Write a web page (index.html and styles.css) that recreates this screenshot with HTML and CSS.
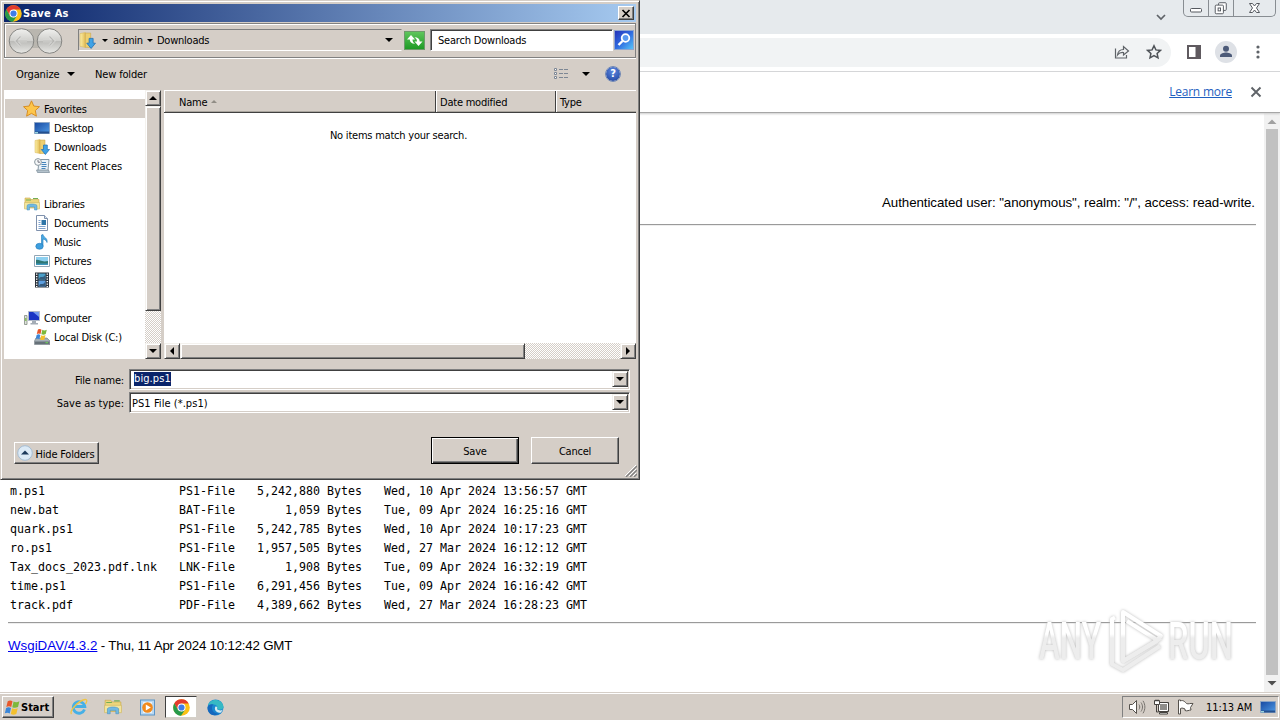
FILE: index.html
```html
<!DOCTYPE html>
<html lang="en">
<head>
  <meta charset="UTF-8" />
  <title>WsgiDAV - Index of /</title>
  <link rel="stylesheet" href="styles.css">
</head>
<body>

  <!-- Shared icons -->
  <svg class="defs" width="0" height="0">
    <defs>
      <linearGradient id="gFolder" x1="0" y1="0" x2="1" y2="0">
        <stop offset="0" stop-color="#fbeea6" /><stop offset="1" stop-color="#e3bd55" />
      </linearGradient>
      <linearGradient id="gScreen" x1="0" y1="0" x2="1" y2="1">
        <stop offset="0" stop-color="#1748a0" /><stop offset="1" stop-color="#4f9be6" />
      </linearGradient>
      <linearGradient id="gBall" x1="0" y1="0" x2="0" y2="1">
        <stop offset="0" stop-color="#f1f1ef" /><stop offset=".48" stop-color="#d0d0cd" />
        <stop offset=".52" stop-color="#bcbcb9" /><stop offset="1" stop-color="#e8e8e5" />
      </linearGradient>
      <linearGradient id="gMark" gradientUnits="userSpaceOnUse" x1="0" y1="34" x2="0" y2="38">
        <stop offset="0" stop-color="#fff" /><stop offset="1" stop-color="#ededed" />
      </linearGradient>
      <symbol id="chrome" viewBox="0 0 16 16">
        <circle cx="8" cy="8" r="7.8" fill="#fbc116" />
        <path d="M8 8 4.6 10 1.2 4.1A7.8 7.8 0 0 1 14.8 4.2H8z" fill="#e33b2e" />
        <path d="M1.2 4.1 4.6 10 8 11.8l3.4-1.8-3.9 5.8A7.8 7.8 0 0 1 1.2 4.1z" fill="#269a4a" />
        <circle cx="8" cy="8" r="3.8" fill="#fff" />
        <circle cx="8" cy="8" r="2.9" fill="#3f7de8" />
      </symbol>
      <symbol id="downloads" viewBox="0 0 16 16">
        <path d="M1 1.5 6 .5v14l-5-1z" fill="url(#gFolder)" stroke="#d9b757" stroke-width=".5" />
        <path d="M6 1h5v13.5H6z" fill="#edcf70" stroke="#c9a244" stroke-width=".5" />
        <path d="M9.5 6h3.8v4.5h2.2l-4.1 5-4.1-5h2.2z" fill="#3fa2e6" stroke="#1c6cb0" stroke-width=".7" />
      </symbol>
      <symbol id="flag" viewBox="0 0 16 16">
        <path d="M3.500 2C5.500.8 7 1.500 8 2L6.800 7.500C5.200 6.500 3.800 6.700 2.200 7.500z" fill="#e8582a" />
        <path d="M9 2.300c2 1 3.500.8 5.500-.3L13.200 7.500c-2 1-3.600.9-5.400.2z" fill="#7db83a" />
        <path d="M2 8.500c1.600-.9 3-.9 4.600 0L5.400 13.600C4 12.700 2.300 12.700.8 13.500z" fill="#3a86d8" />
        <path d="M7.600 8.800c1.800.9 3.400.9 5.300-.1L11.600 14c-1.900 1-3.500.9-5.200.1z" fill="#f4c02c" />
      </symbol>
      <symbol id="libraries" viewBox="0 0 16 16">
        <path d="M1 2h5l1 1.500h8V12H1z" fill="#ecd67c" stroke="#c9aa4b" stroke-width=".6" />
        <path d="M2 4h5M9 2.500h5" stroke="#72ae55" />
        <path d="M.5 6.500h15V13h-3V9.500h-9V13h-3z" fill="#f3e6a0" stroke="#cbb35a" stroke-width=".5" />
        <path d="M3 14V9.500C4 7.500 12 7.500 13 9.500V14h-2.500v-3h-5v3z" fill="#72b9e2" stroke="#4590c2" stroke-width=".5" />
      </symbol>
      <symbol id="monitor" viewBox="0 0 16 16">
        <path d="M.5 2.500h15v11H.5z" fill="url(#gScreen)" stroke="#8ba4c4" />
        <path d="M1 11.500h14v2H1z" fill="#24508f" />
        <path d="M1 12h3v1.500H1z" fill="#9ad2dc" />
      </symbol>
      <symbol id="diskbody" viewBox="0 0 16 16">
        <path d="M2 9h11l3 3v3.500H.5V12z" fill="#a4aeb5" stroke="#6b757c" stroke-width=".6" />
        <path d="M1 12.500h14.500V15H1z" fill="#667178" />
        <path d="M11.500 13.200h2.500v1h-2.500z" fill="#6cdd52" />
      </symbol>
    </defs>
  </svg>

  <div class="screen">

    <!-- Browser window -->
    <div class="browser">
      <div class="tabstrip">
        <svg class="chevron" width="12" height="8" viewBox="0 0 12 8"><path d="M2 2l4 4 4-4" fill="none" stroke="#5f6368" stroke-width="1.700" /></svg>
        <div class="caption">
          <span class="cap"><svg width="24" height="16" viewBox="0 0 24 16"><rect x="6.500" y="8.500" width="11" height="3.500" rx="1" fill="#fff" stroke="#55595f" /></svg></span>
          <span class="cap"><svg width="24" height="16" viewBox="0 0 25 16"><rect x="10" y="2.500" width="8" height="8" rx="1" fill="#fff" stroke="#55595f" /><rect x="6.500" y="5" width="8.500" height="9" rx="1" fill="#fff" stroke="#55595f" /><rect x="9.500" y="8" width="2.500" height="3" fill="#fff" stroke="#55595f" /></svg></span>
          <span class="cap cap-close"><svg width="41" height="16" viewBox="0 0 41 16"><path d="M15.500 3.500h3l2 2.500 2-2.500h3L22.500 8l3 4.500h-3l-2-2.500-2 2.500h-3l3-4.500z" fill="#fff" stroke="#55595f" /></svg></span>
        </div>
      </div>

      <div class="toolbar">
        <div class="omnibox">
          <svg width="16" height="16" viewBox="0 0 16 16"><path d="M1.500 4.500v9.500h11v-3M3.500 11c.5-4 2.500-5.500 6-5.500v-3l5 4.500-5 4V8.500c-2.500-.2-4.500.5-6 2.500z" fill="none" stroke="#5f6368" stroke-width="1.200" /></svg>
          <svg width="16" height="16" viewBox="0 0 16 16"><path d="M8 1.800l1.900 4.100 4.500.5-3.300 3 .9 4.500L8 11.700l-4 2.200.9-4.500-3.300-3 4.500-.5z" fill="none" stroke="#4f5358" stroke-width="1.500" /></svg>
        </div>
        <svg class="panel-icon" width="14" height="14" viewBox="0 0 14 14"><path d="M1 1h12v12H1z" fill="none" stroke="#5f5a5f" stroke-width="2" /><path d="M8.500 1H13v12H8.500z" fill="#5f5a5f" /></svg>
        <svg class="avatar" width="22" height="22" viewBox="0 0 22 22"><circle cx="11" cy="11" r="11" fill="#dee1e6" /><circle cx="11" cy="7.700" r="3" fill="#4c5a78" /><path d="M5 16v-1.500c0-2 4-3 6-3s6 1 6 3V16z" fill="#4c5a78" /></svg>
        <svg class="menu-icon" width="4" height="14" viewBox="0 0 4 14"><circle cx="2" cy="2" r="1.600" fill="#5f6368" /><circle cx="2" cy="7" r="1.600" fill="#5f6368" /><circle cx="2" cy="12" r="1.600" fill="#5f6368" /></svg>
      </div>

      <div class="infobar">
        <a href="#">Learn more</a>
        <svg width="12" height="12" viewBox="0 0 12 12"><path d="M1.500 1.500l9 9M10.500 1.500l-9 9" stroke="#5f6368" stroke-width="1.900" /></svg>
      </div>

      <div class="viewport">
        <div class="page">
          <p class="auth">Authenticated user: "anonymous", realm: "/", access: read-write.</p>
          <hr>
          <table class="files">
            <tr><td>m.ps1</td><td>PS1-File</td><td class="right">5,242,880 Bytes</td><td>Wed, 10 Apr 2024 13:56:57 GMT</td></tr>
            <tr><td>new.bat</td><td>BAT-File</td><td class="right">1,059 Bytes</td><td>Tue, 09 Apr 2024 16:25:16 GMT</td></tr>
            <tr><td>quark.ps1</td><td>PS1-File</td><td class="right">5,242,785 Bytes</td><td>Wed, 10 Apr 2024 10:17:23 GMT</td></tr>
            <tr><td>ro.ps1</td><td>PS1-File</td><td class="right">1,957,505 Bytes</td><td>Wed, 27 Mar 2024 16:12:12 GMT</td></tr>
            <tr><td>Tax_docs_2023.pdf.lnk</td><td>LNK-File</td><td class="right">1,908 Bytes</td><td>Tue, 09 Apr 2024 16:32:19 GMT</td></tr>
            <tr><td>time.ps1</td><td>PS1-File</td><td class="right">6,291,456 Bytes</td><td>Tue, 09 Apr 2024 16:16:42 GMT</td></tr>
            <tr><td>track.pdf</td><td>PDF-File</td><td class="right">4,389,662 Bytes</td><td>Wed, 27 Mar 2024 16:28:23 GMT</td></tr>
          </table>
          <hr>
          <p class="footer"><a href="#">WsgiDAV/4.3.2</a> - Thu, 11 Apr 2024 10:12:42 GMT</p>
        </div>
        <div class="page-scroll">
          <svg width="16" height="16" viewBox="0 0 16 16"><path d="M3.500 11 8 6.500l4.500 4.500z" fill="#a0a0a0" /></svg>
          <div class="page-thumb"></div>
          <svg width="16" height="17" viewBox="0 0 16 17"><path d="M3.500 6h9L8 10.500z" fill="#505050" /></svg>
        </div>
      </div>
    </div>

    <!-- Taskbar -->
    <div class="taskbar">
      <div class="start"><svg width="17" height="17"><use href="#flag" /></svg>Start</div>
      <div class="quick">
        <span class="task"><svg width="18" height="18" viewBox="0 0 18 18"><path d="M14.500 11.500A5.800 5.800 0 1 1 14.800 8.500H5" fill="none" stroke="#46b0e6" stroke-width="2.800" /><path d="M1.500 16C-1 13 8 3 15 1.500c3-.3 1.500 3 .5 4.500" fill="none" stroke="#f0c544" stroke-width="1.300" /></svg></span>
        <span class="task"><svg width="18" height="18"><use href="#libraries" /></svg></span>
        <span class="task"><svg width="17" height="17" viewBox="0 0 17 17"><rect x="1.500" y="1" width="14" height="15" fill="#b9d8f2" stroke="#5b95c8" /><path d="M4 3h9v11H4z" fill="#e8f3fb" /><circle cx="8.500" cy="8.500" r="5.300" fill="#f28a1c" /><path d="M6.800 5.500v6l5-3z" fill="#fff" /></svg></span>
        <span class="task active"><svg width="17" height="17"><use href="#chrome" /></svg></span>
        <span class="task"><svg width="17" height="17" viewBox="0 0 17 17"><circle cx="8.500" cy="8.500" r="8" fill="#1a87d0" /><path d="M1 6.500C3-1 15-1 16.500 7.500c.3 3-4 4-6.500 2.500 1-2 0-4.500-3.500-4.500-2.500 0-4 0-5.500 1z" fill="#36b9c4" /><path d="M.5 9C1 5.500 4 4.800 6.500 5.500c-3.500 3-1 9.500 5.500 9-4 3.500-11.500 1.500-11.500-5.500z" fill="#1668bd" /><path d="M10 10c2 2 5 1.500 6 .5l-2 3C9.500 15 6.500 10 8.500 7.500c2-.2 2 1 1.500 2.500z" fill="#d6ebf0" /></svg></span>
      </div>
      <div class="tray">
        <svg width="18" height="16" viewBox="0 0 18 16"><path d="M1.500 5.500h3l4-4v13l-4-4h-3z" fill="#fff" stroke="#55514c" /><path d="M11 5.500c1 1.500 1 3.500 0 5M13 3.500c2 3 2 6 0 9M15 1.800c2.500 4 2.500 8.500 0 12.500" fill="none" stroke="#77736e" /></svg>
        <svg width="17" height="16" viewBox="0 0 17 16"><path d="M5.500 3.500h10v9h-10z" fill="#8f8d8a" stroke="#45423e" /><path d="M6.500 4.500h8v7h-8z" fill="none" stroke="#fff" /><path d="M6.500 13.500h8v1.500h-8z" fill="#fff" stroke="#45423e" /><path d="M1.500 1.500h5v4h-5z" fill="#fff" stroke="#45423e" /><path d="M3 .5v2M5 .5v2M3.500 6v7h2" fill="none" stroke="#45423e" /></svg>
        <svg width="17" height="16" viewBox="0 0 17 16"><path d="M1.500 1v14h2V9.500c2-1 3 0 4.500.5v1.500c2 1 4-.5 6-.5l-.5-2.500 2.500-4c-3-.5-4.500 1-6.500 0C7 1.500 5 1 3.500 2V1z" fill="#fff" stroke="#55514c" /></svg>
        <span class="clock">11:13 AM</span>
        <svg width="16" height="16"><use href="#monitor" /></svg>
      </div>
    </div>

    <!-- Save As dialog -->
    <div class="dialog">
      <div class="titlebar">
        <svg width="17" height="17"><use href="#chrome" /></svg>
        <span>Save As</span>
        <div class="close-btn"><svg width="10" height="9" viewBox="0 0 10 9"><path d="M1.500 1l7 7M8.500 1l-7 7" stroke="#000" stroke-width="1.700" /></svg></div>
      </div>

      <div class="navbar">
        <svg class="travel" width="56" height="28" viewBox="0 0 56 28">
          <path d="M14 3h28v19H14z" fill="#b9b6af" />
          <circle cx="14.500" cy="15" r="12.300" fill="url(#gBall)" stroke="#858582" />
          <circle cx="42.500" cy="15" r="12.300" fill="url(#gBall)" stroke="#858582" />
          <path d="M20 15H9M13.500 10.500 9 15l4.500 4.500M36 15h11M42.500 10.500 47 15l-4.500 4.500" fill="none" stroke="#e6e6e4" stroke-width="2.600" opacity=".7" />
          <path d="M20 15H9M13.500 10.500 9 15l4.500 4.500M36 15h11M42.500 10.500 47 15l-4.500 4.500" fill="none" stroke="#b7b7b4" stroke-width="1.200" />
        </svg>
        <div class="address">
          <svg width="17" height="17"><use href="#downloads" /></svg>
          <i class="tri small"></i><span>admin</span>
          <i class="tri small"></i><span class="crumb">Downloads</span>
          <i class="tri last"></i>
        </div>
        <div class="refresh"><svg width="19" height="17" viewBox="0 0 19 17"><path d="M2 7.500 6 3l4 4.500H7.500c0 2 .8 3 2.500 4.200-3.500 0-5.200-1.700-5.200-4.200zM17.500 9.500l-4 4.500-4-4.500H12c0-2-.8-3-2.500-4.200 3.500 0 5.200 1.700 5.200 4.200z" fill="#fff" /></svg></div>
        <div class="search">Search Downloads</div>
        <div class="search-btn"><svg width="18" height="18" viewBox="0 0 18 18"><circle cx="10.500" cy="7" r="3.800" fill="#5a9af0" stroke="#fff" stroke-width="1.800" /><path d="M7.500 10 3.500 14" stroke="#fff" stroke-width="2.400" /></svg></div>
      </div>

      <div class="commands">
        <span class="organize">Organize</span><i class="tri"></i>
        <span class="newfolder">New folder</span>
        <svg class="view-icon" width="16" height="14" viewBox="0 0 16 14"><path d="M1.500 1.500h2v2h-2zM1.500 5.500h2v2h-2zM1.500 9.500h2v2h-2z" fill="#fff" stroke="#7d8794" /><path d="M6 2.500h4M11 2.500h4M6 6.500h4M11 6.500h4M6 10.500h4M11 10.500h4" stroke="#7d8794" /></svg>
        <i class="tri"></i>
        <div class="help">?</div>
      </div>

      <div class="panes">
        <div class="tree">
          <ul>
            <li class="top selected"><svg width="17" height="17" viewBox="0 0 16 16"><path d="M8 .8l2.200 4.900 5.300.6-3.900 3.600 1 5.300L8 12.600l-4.600 2.600 1-5.300L.5 6.300l5.300-.6z" fill="#fdc64c" stroke="#d68a1f" stroke-width=".9" /></svg><span>Favorites</span></li>
            <li><svg width="16" height="16"><use href="#monitor" /></svg><span>Desktop</span></li>
            <li><svg width="16" height="16"><use href="#downloads" /></svg><span>Downloads</span></li>
            <li><svg width="16" height="16" viewBox="0 0 16 16"><path d="M5 1.500h10l-1 11H4z" fill="#e9f1f7" stroke="#8799a6" /><path d="M2.500 12h12l1 2.500h-12z" fill="#b5c3cd" stroke="#788a97" stroke-width=".7" /><path d="M8 4.500h4M7.500 6.500h5M7.500 8.500h5M7.500 10.500h4" stroke="#4684ba" /><circle cx="4" cy="4" r="3.400" fill="#f6f8f9" stroke="#8a979f" /><path d="M4 2v2.200h2" fill="none" stroke="#556" stroke-width=".8" /></svg><span class="wide">Recent Places</span></li>
            <li class="gap"></li>
            <li class="top"><svg width="16" height="16"><use href="#libraries" /></svg><span>Libraries</span></li>
            <li><svg width="16" height="16" viewBox="0 0 16 16"><path d="M2.500.5h8l3 3v12h-11z" fill="#fff" stroke="#7f91ad" /><path d="M10.500.5v3h3" fill="#dbe5f2" stroke="#7f91ad" /><path d="M4.500 5.500h2M4.500 7.500h2M4.500 9.500h2M4.500 11.500h7M4.500 13.500h7" stroke="#7ea2cf" /><path d="M7.500 5h4.500v5H7.500z" fill="#2e75a8" /></svg><span>Documents</span></li>
            <li><svg width="16" height="16" viewBox="0 0 16 16"><path d="M7.500 12V1l1.500-.5c.5 3 5 3.500 4 8-.5-2-2-3-4-3.500V12" fill="#4aa9e2" stroke="#1f78bb" stroke-width=".6" /><ellipse cx="5.500" cy="12.300" rx="3.700" ry="3" fill="#3d9ede" stroke="#1f78bb" stroke-width=".6" /></svg><span>Music</span></li>
            <li><svg width="16" height="16" viewBox="0 0 16 16"><path d="M.5 2.500h15v11H.5z" fill="#fff" stroke="#92a6b6" /><path d="M2 4h12v8H2z" fill="#8dd0f0" /><path d="M2 7c3-1 5 2.500 12 1v4H2z" fill="#2f7774" /><path d="M2 10.500h12V12H2z" fill="#3f97bd" /></svg><span>Pictures</span></li>
            <li><svg width="16" height="16" viewBox="0 0 16 16"><path d="M1 .5h14v15H1z" fill="#2b323b" /><path d="M4.500 1.500h7v6h-7z" fill="#4a9fc8" /><path d="M4.500 8.500h7v6h-7z" fill="#5d9fe0" /><path d="M5 7c1-4 4 0 6-4v4zM5 14c1-4 4 0 6-4v4z" fill="#345a7c" /><path d="M2.700 1.500v13.500M13.300 1.500v13.500" stroke="#fff" stroke-width="1.400" stroke-dasharray="1.300 1.200" /></svg><span>Videos</span></li>
            <li class="gap"></li>
            <li class="top"><svg width="16" height="16" viewBox="0 0 16 16"><path d="M4.500 1.500h11v9h-11z" fill="#1a35c4" stroke="#b0b9c8" /><path d="M9 2h6v5z" fill="#7299ef" /><path d="M8 11h4v2h2v1.500H6.500V13H8z" fill="#a4acb5" /><path d="M.5 5.500h2.500v9H.5z" fill="#dde2da" stroke="#828b82" stroke-width=".8" /><path d="M1.200 8h1.200v3H1.200z" fill="#77bb43" /></svg><span>Computer</span></li>
            <li><svg width="16" height="16" viewBox="0 0 16 16"><use href="#diskbody" width="16" height="16" /><use href="#flag" x="1" y="-1" width="13" height="13" /></svg><span>Local Disk (C:)</span></li>
          </ul>
          <div class="vscroll">
            <div class="sbtn"><i class="arrow up"></i></div>
            <div class="vthumb"></div>
            <div class="track"></div>
            <div class="sbtn"><i class="arrow down"></i></div>
          </div>
        </div>

        <div class="list">
          <div class="list-head">
            <span class="col name">Name <i class="sort"></i></span>
            <span class="col date">Date modified</span>
            <span class="col type">Type</span>
          </div>
          <div class="empty">No items match your search.</div>
          <div class="hscroll">
            <div class="sbtn"><i class="arrow left"></i></div>
            <div class="hthumb"></div>
            <div class="track"></div>
            <div class="sbtn"><i class="arrow right"></i></div>
          </div>
        </div>
      </div>

      <div class="fields">
        <div class="field">
          <label class="narrow">File name:</label>
          <div class="combo"><span class="picked">big.ps1</span><div class="sbtn"><i class="arrow down"></i></div></div>
        </div>
        <div class="field">
          <label>Save as type:</label>
          <div class="combo"><span class="filetype">PS1 File (*.ps1)</span><div class="sbtn"><i class="arrow down"></i></div></div>
        </div>
      </div>

      <div class="actions">
        <div class="btn hide"><svg width="16" height="16" viewBox="0 0 16 16"><circle cx="8" cy="8" r="7.300" fill="#dceaf6" stroke="#a5bdd3" /><path d="M4 9.500h8L8 5.500z" fill="#1d3a5c" /></svg><span>Hide Folders</span></div>
        <div class="btn save">Save</div>
        <div class="btn cancel">Cancel</div>
      </div>
      <svg class="grip" width="12" height="12" viewBox="0 0 12 12"><path d="M1 12 12 1M5 12l7-7M9 12l3-3" stroke="#808080" stroke-width="1.400" /><path d="M0 11 11 0M4 11l7-7M8 11l3-3" stroke="#fff" /></svg>
    </div>

    <!-- Watermark -->
    <svg class="watermark" width="210" height="80" viewBox="0 0 210 80">
      <g fill="url(#gMark)">
        <text x="9" y="59" textLength="62" lengthAdjust="spacingAndGlyphs">ANY</text>
        <text x="138" y="59" textLength="65" lengthAdjust="spacingAndGlyphs">RUN</text>
      </g>
      <g fill="none" stroke="url(#gMark)" stroke-width="4" stroke-linejoin="round">
        <path d="M85 17.500l-3 1.500v45l11 6 37-24" />
        <path d="M127 41 93 61V12l38 24-4 4-30-19" />
        <path d="M92 62 131 38" />
      </g>
    </svg>

  </div>
</body>
</html>
```
FILE: styles.css
```css
* {
  box-sizing: border-box;
}

body {
  margin: 0;
  background: #fff;
  font-family: "DejaVu Sans Condensed", "DejaVu Sans", sans-serif;
  font-size: 11px;
  color: #000;
}

svg {
  display: block;
  flex: none;
}

.defs {
  position: absolute;
}

.screen {
  position: relative;
  width: 1280px;
  height: 720px;
  overflow: hidden;
  display: flex;
  flex-direction: column;
}

/* Browser */
.browser {
  flex: 1;
  min-height: 0;
  display: flex;
  flex-direction: column;
}

.tabstrip {
  height: 34px;
  background: #e6eaed;
  display: flex;
  justify-content: flex-end;
  padding-right: 4px;
}

.chevron {
  margin: 13px 16px 0 0;
}

.caption {
  display: flex;
  height: 17px;
  border: 1px solid #888d92;
  border-top: none;
  border-radius: 0 0 5px 5px;
}

.cap + .cap {
  border-left: 1px solid #888d92;
}

.toolbar {
  height: 38px;
  background: #fff;
  border-bottom: 1px solid #d5d7d9;
  display: flex;
  align-items: center;
  justify-content: flex-end;
  padding: 0 20px 1px 0;
}

.omnibox {
  flex: 1;
  height: 29px;
  background: #f1f3f4;
  border-radius: 0 15px 15px 0;
  display: flex;
  align-items: center;
  justify-content: flex-end;
  gap: 16px;
  padding-right: 9px;
}

.panel-icon {
  margin-left: 16px;
}

.avatar {
  margin-left: 14px;
}

.menu-icon {
  margin-left: 19px;
}

.infobar {
  height: 41px;
  background: #fff;
  border-bottom: 1px solid #a6a6a6;
  box-shadow: 0 1px 2px #ccc;
  display: flex;
  align-items: center;
  justify-content: flex-end;
  gap: 18px;
  padding-right: 18px;
  position: relative;
}

.infobar a {
  font: 12px "Open Sans", "Noto Sans", sans-serif;
  letter-spacing: -.22px;
  margin-bottom: 2px;
  color: #1f5fc0;
}

.viewport {
  flex: 1;
  min-height: 0;
  display: flex;
}

.page {
  flex: 1;
  padding: 80px 8px 0;
  font-family: "Liberation Sans", Arial, sans-serif;
  font-size: 13.33px;
}

.page p {
  margin: 0;
  line-height: 19px;
}

.page .auth {
  text-align: right;
  letter-spacing: -.07px;
  padding-right: 1px;
}

.page hr {
  margin: 12px 0 0;
  border: none;
  border-top: 1px solid #9a9a9a;
  border-bottom: 1px solid #eee;
}

.files {
  margin-top: 256px;
  border-collapse: collapse;
  font-family: "DejaVu Sans Mono", monospace;
  font-size: 11.63px;
}

.files td {
  height: 19px;
  padding: 0 0 0 22px;
  line-height: 19px;
  white-space: pre;
}

.files td:first-child {
  width: 149px;
  padding-left: 2px;
}

.files .right {
  text-align: right;
}

.files + hr {
  margin-top: 7px;
}

.page .footer {
  margin-top: 12px;
  letter-spacing: -.22px;
}

.footer a {
  color: #0000ee;
  letter-spacing: 0;
}

.page-scroll {
  width: 16px;
  background: #f1f1f1;
  display: flex;
  flex-direction: column;
}

.page-thumb {
  flex: 1;
  margin: 0 2px;
  background: #c1c1c1;
}

/* Taskbar */
.taskbar {
  height: 28px;
  background: #d5cec7;
  border-top: 1px solid #d5cec7;
  box-shadow: inset 0 1px #fff;
  display: flex;
  align-items: center;
  padding: 1px 1px 0 2px;
}

.start {
  width: 52px;
  height: 22px;
  border: 1px solid;
  border-color: #fff #404040 #404040 #fff;
  box-shadow: inset -1px -1px #808080;
  display: flex;
  align-items: center;
  padding-left: 1px;
  font-weight: bold;
  letter-spacing: 0;
}

.quick {
  display: flex;
  margin-left: 9px;
  gap: 2px;
}

.task {
  width: 32px;
  height: 22px;
  display: flex;
  align-items: center;
  justify-content: center;
}

.task.active {
  background: #fff;
  border: 1px solid;
  border-color: #404040 #d4d0c8 #d4d0c8 #404040;
}

.tray {
  margin-left: auto;
  width: 157px;
  height: 22px;
  border: 1px solid;
  border-color: #808080 #fff #fff #808080;
  display: flex;
  align-items: center;
  padding-left: 5px;
  gap: 7px;
}

.clock {
  width: 47px;
  margin-left: 5px;
  letter-spacing: -.1px;
  white-space: nowrap;
}

/* Dialog */
.dialog {
  position: absolute;
  left: 0;
  top: 0;
  width: 640px;
  height: 480px;
  background: #d5cec7;
  border: 1px solid;
  border-color: #d5cec7 #404040 #404040 #d5cec7;
  box-shadow: inset 1px 1px #fff, inset -1px -1px #808080;
  padding: 3px;
  letter-spacing: -.22px;
}

.titlebar {
  height: 18px;
  background: linear-gradient(90deg, #0a246a, #a6caf0);
  color: #fff;
  font-weight: bold;
  letter-spacing: .25px;
  display: flex;
  align-items: center;
  padding: 0 2px 0 1px;
  gap: 1px;
}

.close-btn {
  margin-left: auto;
  width: 16px;
  height: 14px;
  background: #d5cec7;
  border: 1px solid;
  border-color: #fff #404040 #404040 #fff;
  box-shadow: inset -1px -1px #808080;
  display: flex;
  align-items: center;
  justify-content: center;
  padding-right: 1px;
}

.navbar {
  height: 35px;
  margin-top: 1px;
  border: 1px solid #808080;
  box-shadow: 0 1px #fff, inset 1px 1px #fff;
  display: flex;
  align-items: center;
  padding: 1px 0 2px 2px;
}

.address {
  width: 324px;
  height: 22px;
  margin-left: 15px;
  border: 1px solid;
  border-color: #808080 #d5cec7 #fff #808080;
  display: flex;
  align-items: center;
}

.crumb {
  margin-left: -1px;
}

.tri {
  width: 0;
  height: 0;
  border: 4px solid transparent;
  border-top-color: #000;
  border-bottom: none;
}

.tri.small {
  border-width: 3px;
  border-bottom: none;
  margin: 0 5px 0 4px;
}

.address svg + .tri.small {
  margin-left: 6px;
}

.tri.last {
  margin-left: auto;
  margin-right: 8px;
}

.refresh {
  width: 21px;
  height: 19px;
  margin-left: 2px;
  background: linear-gradient(#5fc55c, #1e9b25);
  border: 1px solid #6d9a6b;
  display: flex;
  align-items: center;
  justify-content: center;
}

.search {
  width: 183px;
  height: 22px;
  margin-left: 5px;
  background: #fff;
  border: 1px solid;
  border-color: #808080 #fff #fff #808080;
  box-shadow: inset 1px 1px #404040;
  padding: 1px 0 0 7px;
  line-height: 20px;
  letter-spacing: -.2px;
}

.search-btn {
  width: 20px;
  height: 20px;
  margin-left: 1px;
  background: linear-gradient(135deg, #2533b8, #2f6be0 50%, #58c4f8);
  border: 1px solid #8fa5cf;
}

.commands {
  height: 32px;
  display: flex;
  align-items: center;
  padding: 0 15px 0 12px;
}

.organize {
  width: 51px;
  letter-spacing: -.1px;
}

.newfolder {
  margin-left: 20px;
  letter-spacing: -.15px;
}

.view-icon {
  margin-left: auto;
  margin-right: 13px;
}

.help {
  width: 16px;
  height: 16px;
  margin-left: 15px;
  border-radius: 50%;
  border: 1px solid #dfe6f2;
  outline: 1px solid #7185ad;
  outline-offset: -1px;
  background: radial-gradient(circle at 50% 30%, #5f8ae0, #1b3f9c);
  color: #fff;
  font-weight: bold;
  line-height: 14px;
  text-align: center;
}

.panes {
  height: 269px;
  display: flex;
  gap: 3px;
}

.tree {
  width: 157px;
  background: #fff;
  display: flex;
}

.tree ul {
  flex: 1;
  list-style: none;
  margin: 0;
  padding: 9px 0 0 1px;
}

.tree li {
  height: 19px;
  display: flex;
  align-items: center;
  gap: 4px;
  padding-left: 29px;
  white-space: nowrap;
}

.tree li span {
  padding-top: 2px;
}

.tree li .wide {
  letter-spacing: -.05px;
}

.tree li.top {
  padding-left: 19px;
}

.tree li.top.selected {
  padding-left: 18px;
  background: #d5cec7;
}

.vscroll {
  width: 16px;
  display: flex;
  flex-direction: column;
}

.sbtn,
.vthumb,
.hthumb {
  background: #d5cec7;
  border: 1px solid;
  border-color: #f4f2ee #404040 #404040 #f4f2ee;
  box-shadow: inset 1px 1px #fff, inset -1px -1px #808080;
}

.sbtn {
  width: 16px;
  height: 16px;
  flex: none;
  display: flex;
  align-items: center;
  justify-content: center;
}

.arrow {
  border: 4px solid transparent;
}

.arrow.up {
  border-top: none;
  border-bottom-color: #000;
}

.arrow.down {
  border-bottom: none;
  border-top-color: #000;
}

.arrow.left {
  border-left: none;
  border-right-color: #000;
}

.arrow.right {
  border-right: none;
  border-left-color: #000;
}

.vthumb {
  height: 205px;
}

.track {
  flex: 1;
  background: repeating-conic-gradient(#d5cec7 0 25%, #fff 0 50%) 0 0 / 2px 2px;
}

.list {
  flex: 1;
  background: #fff;
  display: flex;
  flex-direction: column;
}

.list-head {
  height: 23px;
  background: #d5cec7;
  border-top: 1px solid #fff;
  border-bottom: 1px solid #404040;
  box-shadow: inset 0 -1px #aaa69f;
  display: flex;
}

.col {
  border-left: 1px solid #fff;
  border-right: 1px solid #404040;
  padding-left: 3px;
  line-height: 23px;
  height: 21px;
}

.col.name {
  width: 272px;
  padding-left: 14px;
}

.col.date {
  width: 120px;
}

.col.type {
  flex: 1;
  border-right: none;
}

.sort {
  display: inline-block;
  border: 3px solid transparent;
  border-top: none;
  border-bottom-color: #918d86;
  vertical-align: 3px;
  margin-left: 1px;
}

.empty {
  flex: 1;
  padding-top: 16px;
  text-align: center;
  padding-right: 3px;
}

.hscroll {
  height: 16px;
  display: flex;
}

.hthumb {
  width: 345px;
}

.fields {
  padding: 10px 6px 0 0;
  display: flex;
  flex-direction: column;
  gap: 2px;
}

.field {
  display: flex;
  align-items: center;
}

.field label {
  width: 120px;
  text-align: right;
  margin-right: 5px;
  padding-top: 1px;
  letter-spacing: 0;
}

.field label.narrow {
  letter-spacing: -.2px;
}

.combo {
  flex: 1;
  height: 21px;
  background: #fff;
  border: 1px solid;
  border-color: #808080 #fff #fff #808080;
  box-shadow: inset 1px 1px #404040, inset -1px -1px #d5cec7;
  display: flex;
  align-items: center;
  justify-content: space-between;
  padding: 1px 1px 2px 2px;
}

.picked {
  background: #0a246a;
  color: #fff;
  margin-left: 2px;
  line-height: 14px;
  letter-spacing: .1px;
}

.filetype {
  padding-top: 2px;
  letter-spacing: .05px;
}

.actions {
  display: flex;
  align-items: flex-start;
  padding: 24px 17px 0 10px;
}

.btn {
  width: 88px;
  height: 27px;
  border: 1px solid;
  border-color: #fff #404040 #404040 #fff;
  box-shadow: inset -1px -1px #808080;
  display: flex;
  align-items: center;
  justify-content: center;
  padding-top: 1px;
}

.btn.hide {
  width: 85px;
  height: 22px;
  margin-top: 5px;
  margin-right: auto;
  padding: 0 2px 1px 0;
  gap: 3px;
  white-space: nowrap;
}

.btn.hide span {
  padding-top: 3px;
}

.btn.save {
  border-color: #000;
  box-shadow: inset 1px 1px #fff, inset -1px -1px #404040, inset -2px -2px #808080;
  margin-right: 12px;
}

.grip {
  position: absolute;
  right: 2px;
  bottom: 2px;
}

.watermark {
  position: absolute;
  left: 1030px;
  top: 600px;
  overflow: visible;
  font: 500 52px "Roboto", sans-serif;
  filter: drop-shadow(0 0 1.5px #bbb);
}
```
